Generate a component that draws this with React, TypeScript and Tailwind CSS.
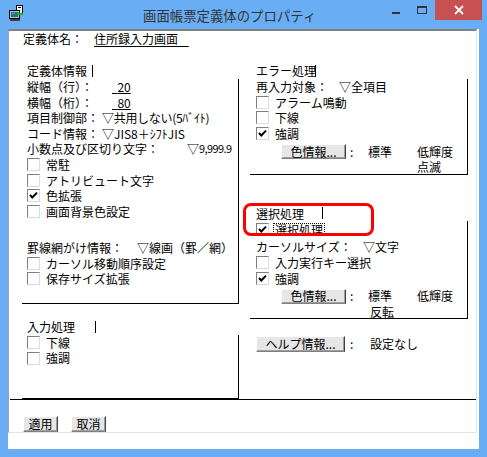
import React from "react";

const CheckBox = ({ checked }: { checked?: boolean }) => (
  <span className="relative inline-block w-[13px] h-[13px] shrink-0 bg-white border border-t-[#808080] border-l-[#808080] border-r-[#dcdcdc] border-b-[#dcdcdc]">
    {checked && (
      <svg className="absolute left-0 top-0" width="11" height="11" viewBox="0 0 11 11">
        <path d="M2 5 L4.3 7.5 L9 2.6" fill="none" stroke="#000" strokeWidth="2" />
      </svg>
    )}
  </span>
);

const Row = ({ children, className = "" }: { children: React.ReactNode; className?: string }) => (
  <div className={"flex items-center h-[15.6px] whitespace-nowrap " + className}>{children}</div>
);

const CheckRow = ({ checked, label }: { checked?: boolean; label: string }) => (
  <Row>
    <CheckBox checked={checked} />
    <span className="ml-[6px]">{label}</span>
  </Row>
);

const GroupLabel = ({ text, w, className = "" }: { text: string; w: string; className?: string }) => (
  <div className={"flex items-center h-[16px] whitespace-nowrap " + className}>
    <span className={"inline-block " + w}>{text}</span>
    <span className="inline-block w-px h-[12px] bg-black" />
  </div>
);

const WinButton = ({ w, h = "h-[15px]", children }: { w: string; h?: string; children: React.ReactNode }) => (
  <span
    className={
      "inline-flex items-center justify-center bg-[#e6e6e6] border border-t-white border-l-white border-r-[#404040] border-b-[#808080] shadow-[inset_-1px_-1px_0_#a0a0a0] leading-none " +
      w +
      " " +
      h
    }
  >
    {children}
  </span>
);

const ColorRow = ({ className = "" }: { className?: string }) => (
  <div className={"flex items-center h-[15px] whitespace-nowrap " + className}>
    <span className="ml-[25px]">
      <WinButton w="w-[65px]">色情報...</WinButton>
    </span>
    <span className="ml-[4px] inline-block w-[18px]">:</span>
    <span className="inline-block w-[49px]">標準</span>
    <span>低輝度</span>
  </div>
);

function TitleBar() {
  return (
    <div className="h-[29px] flex items-start">
      <svg className="ml-[8px] mt-[5px]" width="17" height="17" viewBox="0 0 17 17">
        <rect x="8.5" y="0.5" width="6" height="8" fill="#fff" stroke="#000" />
        <rect x="10" y="2" width="3" height="1" fill="#000" />
        <rect x="1.5" y="5.5" width="10" height="8" fill="#c0c0c0" stroke="#000" />
        <rect x="3" y="7" width="7" height="5" fill="#008080" />
        <rect x="4" y="8" width="3" height="1" fill="#ff40ff" />
        <rect x="9" y="8" width="6" height="2" fill="#00c000" />
        <rect x="2" y="14" width="10" height="2" fill="#404040" />
      </svg>
      <span className="ml-[118px] mt-[6px] text-[13.4px] leading-[18px] text-[#333] whitespace-nowrap">
        画面帳票定義体のプロパティ
      </span>
      <div className="flex-1" />
      <span className="w-[26px] h-[20px] flex items-center justify-center">
        <span className="block w-[8px] h-[2px] mt-[5px] bg-[#333]" />
      </span>
      <span className="w-[26px] h-[20px] flex items-center justify-center">
        <span className="block w-[10px] h-[8px] border border-[#333] border-t-2 -mt-[1px]" />
      </span>
      <span className="w-[47px] h-[20px] bg-[#c75050] flex items-center justify-center">
        <svg width="10" height="10" viewBox="0 0 10 10">
          <path d="M1 1 L9 9 M9 1 L1 9" stroke="#fff" strokeWidth="1.8" />
        </svg>
      </span>
      <span className="w-[5px]" />
    </div>
  );
}

export default function App() {
  return (
    <div className="relative w-[487px] h-[457px] bg-[#69aef5] flex flex-col font-['Noto_Sans_CJK_JP','Noto_Sans',sans-serif] text-[12px] leading-[15.6px] text-black">
      <TitleBar />
      <div className="mx-[8px] h-[420px] bg-white flex flex-col">
        <div className="w-[469px] h-[404px] flex flex-col border-l border-l-[#a0a0a0] border-t-2 border-t-[#808080] border-r border-r-[#e3e3e3] border-b border-b-[#e3e3e3]">
          {/* 定義体名 */}
          <div className="h-[16px] pl-[14px] flex items-center whitespace-nowrap">
            <span className="inline-block w-[71px]">定義体名：</span>
            <span className="underline underline-offset-[2px]">住所録入力画面{"\u00a0\u00a0\u00a0\u00a0"}</span>
          </div>

          <div className="mt-[16px] h-[336px] pl-[13px] flex">
            {/* left column */}
            <div className="w-[217px] flex flex-col">
              <GroupLabel text="定義体情報" w="w-[65px]" className="pl-[5px]" />
              <div className="border-r border-b border-black pl-[5px] pb-[16px]">
                <Row>
                  <span className="inline-block w-[85px]">縦幅（行）：</span>
                  <span className="inline-block w-[18px] text-right underline underline-offset-[1px]">
                    {"\u00a0\u00a0"}20
                  </span>
                </Row>
                <Row>
                  <span className="inline-block w-[85px]">横幅（桁）：</span>
                  <span className="inline-block w-[18px] text-right underline underline-offset-[1px]">
                    {"\u00a0\u00a0"}80
                  </span>
                </Row>
                <Row>
                  <span className="inline-block w-[75px]">項目制御部：</span>
                  <span className="tracking-[-0.3px]">▽共用しない(5ﾊﾞｲﾄ)</span>
                </Row>
                <Row>
                  <span className="inline-block w-[75px]">コード情報：</span>
                  <span>▽JIS8＋ｼﾌﾄJIS</span>
                </Row>
                <Row>
                  <span className="inline-block w-[160px]">小数点及び区切り文字：</span>
                  <span>▽</span>
                  <span className="text-[11px] tracking-[-0.6px]">9,999.9</span>
                </Row>
                <CheckRow label="常駐" />
                <CheckRow label="アトリビュート文字" />
                <CheckRow checked label="色拡張" />
                <CheckRow label="画面背景色設定" />
                <Row className="mt-[20.6px]">
                  <span className="inline-block w-[110px]">罫線網がけ情報：</span>
                  <span>▽線画（罫／網）</span>
                </Row>
                <CheckRow label="カーソル移動順序設定" />
                <CheckRow label="保存サイズ拡張" />
              </div>

              <GroupLabel text="入力処理" w="w-[68px]" className="pl-[5px] mt-[15px]" />
              <div className="flex-1 border-r border-b border-black pl-[5px]">
                <CheckRow label="下線" />
                <CheckRow label="強調" />
              </div>
            </div>

            {/* right column */}
            <div className="ml-[11px] w-[218px] flex flex-col">
              <GroupLabel text="エラー処理" w="w-[59px]" className="pl-[6px]" />
              <div className="border-r border-b border-black pl-[6px]">
                <Row>
                  <span className="inline-block w-[83px]">再入力対象：</span>
                  <span>▽全項目</span>
                </Row>
                <CheckRow label="アラーム鳴動" />
                <CheckRow label="下線" />
                <CheckRow checked label="強調" />
                <ColorRow className="mt-[2px] h-[16px]" />
                <div className="h-[15px] leading-[15px] pl-[161px]">点滅</div>
              </div>

              <GroupLabel text="選択処理" w="w-[66px]" className="pl-[6px] mt-[30px]" />
              <div className="border-r border-b border-black pl-[6px]">
                <div className="flex items-center h-[16px] whitespace-nowrap">
                  <CheckBox checked />
                  <span className="ml-[5px] inline-block h-[11px] leading-[11px] px-px outline outline-1 outline-dotted outline-black">
                    選択処理
                  </span>
                </div>
                <Row className="mt-[2px]">
                  <span className="inline-block w-[107px]">カーソルサイズ：</span>
                  <span>▽文字</span>
                </Row>
                <CheckRow label="入力実行キー選択" />
                <CheckRow checked label="強調" />
                <ColorRow className="mt-[2.6px]" />
                <div className="h-[14.4px] leading-[15px] pl-[114px]">反転</div>
              </div>

              <div className="mt-[16.6px] h-[16px] pl-[6px] flex items-center whitespace-nowrap">
                <WinButton w="w-[89px]" h="h-[16px]">
                  ヘルプ情報...
                </WinButton>
                <span className="ml-[5px] inline-block w-[20px]">:</span>
                <span>設定なし</span>
              </div>
            </div>
          </div>

          <div className="h-px bg-black ml-px" />

          <div className="mt-[16px] h-[16px] pl-[14px] flex items-end gap-[13px]">
            <WinButton w="w-[35px]" h="h-[16px]">
              適用
            </WinButton>
            <WinButton w="w-[35px]" h="h-[16px]">
              取消
            </WinButton>
          </div>
        </div>
      </div>

      {/* annotation */}
      <div className="absolute left-[243px] top-[203px] w-[131px] h-[33px] border-[3px] border-[#ff0000] rounded-[8px] pointer-events-none" />
    </div>
  );
}
